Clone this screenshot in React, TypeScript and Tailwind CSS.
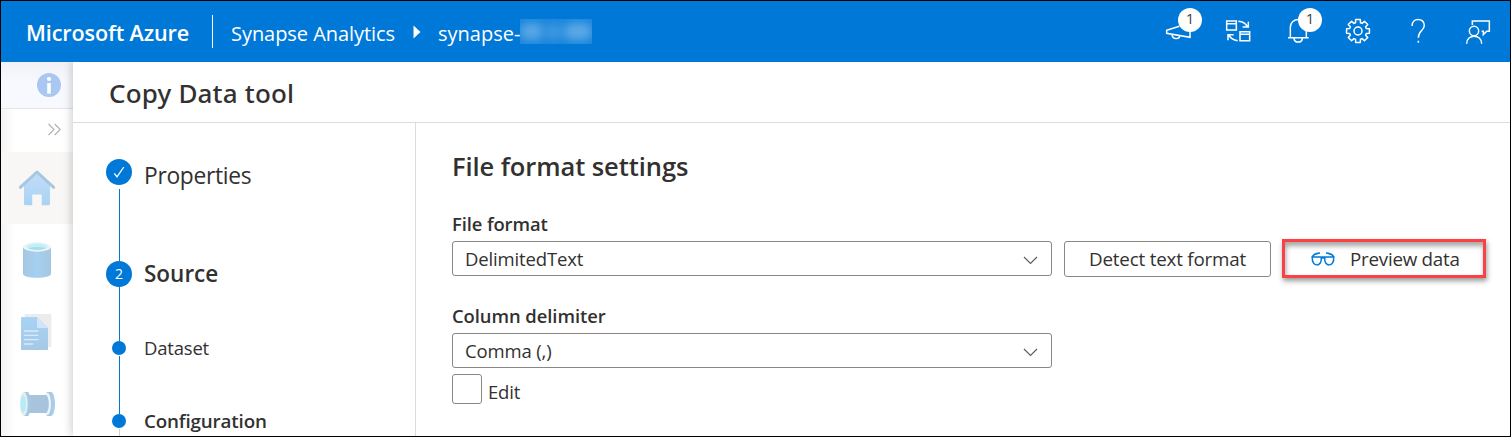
import type { ReactNode } from "react";

function HeaderIcon({ cx, children, badge }: { cx: number; children: ReactNode; badge?: string }) {
  return (
    <button className="relative flex h-full w-[60px] items-center justify-center pb-px">
      <svg
        width="40"
        height="40"
        viewBox={`${cx - 60} 33 120 120`}
        fill="none"
        stroke="white"
        strokeWidth="4.5"
      >
        {children}
      </svg>
      {badge && (
        <span className="absolute left-[30px] top-[7px] flex size-6 items-center justify-center rounded-full bg-white pb-[3px] text-[15px] leading-none text-[#444]">
          {badge}
        </span>
      )}
    </button>
  );
}

function gearPath(cx: number, cy: number) {
  const pts: string[] = [];
  for (let i = 0; i < 8; i++) {
    const a = (i * Math.PI) / 4;
    const steps: [number, number][] = [
      [-0.29, 26],
      [-0.2, 35],
      [0.2, 35],
      [0.29, 26],
    ];
    for (const [d, r] of steps) {
      pts.push(`${(cx + r * Math.cos(a + d)).toFixed(1)} ${(cy + r * Math.sin(a + d)).toFixed(1)}`);
    }
  }
  return `M${pts.join("L")}Z`;
}

function Header() {
  return (
    <header className="flex h-[61px] shrink-0 items-center bg-[#0078d7] pr-[2px] text-white">
      <span className="ml-[25px] w-[186px] whitespace-nowrap pt-[3px] text-[21.6px] font-semibold leading-8 tracking-[-0.12px]">
        Microsoft Azure
      </span>
      <span className="h-[33px] w-px bg-white" />
      <span className="ml-[18px] w-[164px] whitespace-nowrap pt-[5px] text-[20px] leading-8 tracking-[-0.05px]">Synapse Analytics</span>
      <svg className="ml-[18px]" width="8" height="14" viewBox="0 0 8 14" fill="white">
        <path d="M0.5 0.5L7.5 7L0.5 13.5Z" />
      </svg>
      <span className="ml-[17px] whitespace-nowrap pt-[5px] text-[20px] leading-8">synapse-</span>
      <span className="-mt-[1px] flex h-[25px] w-[72px] items-center overflow-hidden bg-[#1c86dc]">
        <span className="h-[17px] w-6 rounded-full bg-[#58a6e6] blur-[4px]" />
        <span className="h-[15px] w-5 rounded-full bg-[#3d98e0] blur-[4px]" />
        <span className="h-[17px] w-[28px] rounded-full bg-[#5aa8e6] blur-[4px]" />
      </span>
      <nav className="ml-auto flex h-full">
        <HeaderIcon cx={114} badge="1">
          <path d="M118 79L80 91V100L150 112V85M96 104C97 119 118 119 119 108" />
        </HeaderIcon>
        <HeaderIcon cx={294}>
          <path d="M260 63H289V90H260ZM260 71H289M300 95H329V122H300ZM300 103H329M295 64Q315 66 322 80M325 65V81H308M293 122Q274 119 267 106M264 121V104H281" />
        </HeaderIcon>
        <HeaderIcon cx={474} badge="1">
          <path d="M444 113H506M451 113V82C451 51 499 51 499 82V113M462 115C463 130 486 130 487 115" />
        </HeaderIcon>
        <HeaderIcon cx={654}>
          <path d={gearPath(654, 93)} strokeLinejoin="round" />
          <circle cx="654" cy="93" r="12" />
        </HeaderIcon>
        <HeaderIcon cx={834}>
          <path d="M816 78C816 51 853 53 853 76C853 92 835 92 835 113M835 122V128" />
        </HeaderIcon>
        <HeaderIcon cx={1014}>
          <circle cx="1002" cy="93" r="14" />
          <path d="M980 131C980 101 1025 101 1025 131M997 75V63H1048V94H1040L1030 104V94H1025" />
        </HeaderIcon>
      </nav>
    </header>
  );
}

function Rail() {
  return (
    <aside className="flex w-[72px] shrink-0 flex-col bg-[linear-gradient(90deg,#f4f4f4,#ffffff_14px)]">
      <div className="flex h-[47px] shrink-0 items-center justify-end border-b border-[#e5e5e8] bg-[linear-gradient(180deg,#eff1f6,#f7f9fe_20px)] pr-3">
        <svg width="24" height="24" viewBox="0 0 24 24">
          <circle cx="12" cy="12" r="12" fill="#a9c7f1" />
          <circle cx="12" cy="6" r="2.1" fill="white" />
          <path d="M10.2 10H13.8V20.7H10.2Z" fill="white" />
        </svg>
      </div>
      <div className="flex h-[43px] shrink-0 items-center justify-end pb-0.5 pr-[11px]">
        <svg width="15" height="13" viewBox="0 0 15 13" fill="none" stroke="#b5b3b1" strokeWidth="1.2">
          <path d="M1.5 1L7 6.5L1.5 12M7.7 1L13.2 6.5L7.7 12" />
        </svg>
      </div>
      <div className="flex h-[72px] shrink-0 items-center justify-center bg-[#f8f7f6]">
        <svg width="38" height="38" viewBox="54 88 114 114">
          <defs>
            <linearGradient id="house" x1="0" y1="0" x2="0" y2="1">
              <stop offset="0" stopColor="#c4dcfa" />
              <stop offset="1" stopColor="#a8d3f3" />
            </linearGradient>
          </defs>
          <path d="M111 98L150 132V192Q150 197 145 197H125V165H97V197H77Q72 197 72 192V132Z" fill="url(#house)" />
          <path d="M98 165H124V195H98Z" fill="#f8f7f6" />
          <path d="M61 143L111 97L161 143" fill="none" stroke="#a5c7df" strokeWidth="9" strokeLinecap="round" strokeLinejoin="round" />
        </svg>
      </div>
      <div className="flex h-[72px] shrink-0 items-center justify-center">
        <svg width="38" height="38" viewBox="54 303 114 114">
          <defs>
            <linearGradient id="cylinder">
              <stop offset="0" stopColor="#a5c7e1" />
              <stop offset="0.5" stopColor="#a5d0f0" />
              <stop offset="1" stopColor="#a5c7e1" />
            </linearGradient>
          </defs>
          <path d="M69 321V401C69 417 153 417 153 401V321Z" fill="url(#cylinder)" />
          <ellipse cx="111" cy="321" rx="42" ry="14" fill="#f1f2f3" />
          <ellipse cx="111" cy="320" rx="32" ry="9.5" fill="#bdf1fb" />
          <path d="M84 325Q111 317 138 325Q111 335 84 325Z" fill="#a8dcea" />
        </svg>
      </div>
      <div className="flex h-[72px] shrink-0 items-center justify-center">
        <svg width="38" height="38" viewBox="54 69 114 114">
          <defs>
            <linearGradient id="doc" x1="0" y1="0" x2="0" y2="1">
              <stop offset="0" stopColor="#a7d3f5" />
              <stop offset="1" stopColor="#a5c9e5" />
            </linearGradient>
          </defs>
          <path d="M74 72H154V171H74Z" fill="#ececec" />
          <path d="M63 81H111L144 114V180H63Z" fill="url(#doc)" />
          <path d="M111 81L144 114H111Z" fill="#d3e5fc" />
          <path d="M73 123H114M73 136H114M73 149H114M73 162H98" stroke="#d9eafc" strokeWidth="4" strokeLinecap="round" />
        </svg>
      </div>
      <div className="flex h-[72px] shrink-0 items-center justify-center">
        <svg width="38" height="38" viewBox="54 285 114 114">
          <ellipse cx="153" cy="342" rx="12" ry="36" fill="#a5cdec" />
          <path d="M140 306H154V378H140Z" fill="#a5c9e5" />
          <ellipse cx="142" cy="342" rx="11" ry="34" fill="#edf4f9" />
          <path d="M86 315H139C149 325 149 359 139 369H86Z" fill="#a7c4dc" />
          <path d="M71 306H84C95 316 95 368 84 378H71Z" fill="#a5c9e5" />
          <ellipse cx="71" cy="342" rx="12" ry="36" fill="#eeeeee" />
          <ellipse cx="70" cy="342" rx="8" ry="27" fill="#b0edf8" />
        </svg>
      </div>
    </aside>
  );
}

function Steps() {
  return (
    <ol className="w-[343px] shrink-0 overflow-hidden border-r border-[#dcdcdc] pl-[33px] pt-9 text-[#323130]">
      <li className="flex h-[102px] gap-3">
        <div className="flex w-[26px] flex-col items-center">
          <span className="flex size-[26px] shrink-0 items-center justify-center rounded-full bg-[#0078d7]">
            <svg width="12" height="12" viewBox="0 0 12 12" fill="none" stroke="white" strokeWidth="1.3">
              <path d="M1.3 7.3L4 10.8L10.8 1" />
            </svg>
          </span>
          <span className="ml-px mt-1 w-px flex-1 bg-[#0078d7]" />
        </div>
        <span className="h-[34px] text-[22.8px] leading-[34px] tracking-[-0.3px]">Properties</span>
      </li>
      <li className="flex h-20 gap-3">
        <div className="flex w-[26px] flex-col items-center">
          <span className="flex size-[26px] shrink-0 items-center justify-center rounded-full bg-[#0078d7] text-[14px] leading-none text-white">
            2
          </span>
          <span className="ml-px w-px flex-1 bg-[#0078d7]" />
        </div>
        <span className="h-[26px] text-[22.5px] font-semibold leading-[26px]">Source</span>
      </li>
      <li className="flex h-[73px] gap-3">
        <div className="flex w-[26px] flex-col items-center">
          <span className="size-[14px] shrink-0 rounded-full bg-[#0078d7]" />
          <span className="ml-px mt-px w-px flex-1 bg-[#0078d7]" />
        </div>
        <span className="h-[14px] text-[18.5px] leading-[14px] tracking-[-0.2px]">Dataset</span>
      </li>
      <li className="flex h-[73px] gap-3">
        <div className="flex w-[26px] flex-col items-center">
          <span className="size-[14px] shrink-0 rounded-full bg-[#0078d7]" />
          <span className="ml-px mt-px w-px flex-1 bg-[#d0d0d0]" />
        </div>
        <span className="h-[14px] text-[18.8px] font-semibold leading-[14px] tracking-[-0.15px]">Configuration</span>
      </li>
    </ol>
  );
}

function Select({ value }: { value: string }) {
  return (
    <div className="flex h-[35px] w-[600px] items-center justify-between rounded-[3px] border border-[#8a8886] pl-3 pr-[13px] text-[18.5px] tracking-[-0.15px]">
      <span className="pt-px">{value}</span>
      <svg className="mt-1" width="15" height="9" viewBox="0 0 15 9" fill="none" stroke="#605e5c" strokeWidth="1.2">
        <path d="M1 1L7.5 7.5L14 1" />
      </svg>
    </div>
  );
}

function Settings() {
  return (
    <section className="flex min-w-0 flex-1 flex-col pl-9 pt-[27px] text-[#323130]">
      <h2 className="h-8 text-[25.5px] font-semibold leading-8 tracking-[-0.08px]">File format settings</h2>
      <label className="mt-[30px] h-6 text-[18.4px] font-semibold leading-6 tracking-[-0.1px]">File format</label>
      <div className="mt-[3px] flex h-[39px] items-center">
        <Select value="DelimitedText" />
        <button className="ml-3 h-9 w-[207px] rounded-[3px] border border-[#8a8886] pt-px text-[18.8px] leading-none tracking-[-0.2px]">
          Detect text format
        </button>
        <div className="ml-[11px] flex h-[39px] w-[204px] items-center border-[3px] border-[#fb4143] pl-[26px] shadow-[1px_3px_5px_rgba(0,0,0,0.4),inset_1px_4px_5px_rgba(0,0,0,0.35)]">
          <svg width="24" height="14" viewBox="813 92 72 42" fill="none" stroke="#0078d7" strokeWidth="4.5">
            <path d="M814 107H884M843 112Q849 107 855 112M817 107C820 98 828 97 840 95M881 107C878 98 870 97 858 95" />
            <path d="M817 108C814 137 846 139 844 109M881 108C884 137 852 139 854 109" />
          </svg>
          <span className="ml-[15px] whitespace-nowrap pt-px text-[18.8px] leading-none tracking-[-0.25px]">Preview data</span>
        </div>
      </div>
      <label className="mt-[26px] h-6 text-[18.4px] font-semibold leading-6 tracking-[-0.05px]">Column delimiter</label>
      <div className="mt-[5px]">
        <Select value="Comma (,)" />
      </div>
      <div className="mt-1.5 flex items-start">
        <span className="size-[30px] rounded-[3px] border border-[#8a8886]" />
        <span className="ml-1.5 pt-[3px] text-[18.5px] leading-[30px] tracking-[-0.2px]">Edit</span>
      </div>
    </section>
  );
}

export default function App() {
  return (
    <div className="flex h-[437px] w-[1511px] flex-col overflow-hidden border border-black bg-white font-['Open_Sans','Noto_Sans',sans-serif]">
      <Header />
      <div className="flex min-h-0 flex-1 overflow-hidden">
        <Rail />
        <main className="relative flex min-w-0 flex-1 flex-col bg-white shadow-[-1px_0_9px_rgba(0,0,0,0.22)]">
          <h1 className="h-[61px] shrink-0 border-b border-[#dcdcdc] pl-9 font-['Noto_Sans'] text-[26px] font-medium leading-[63px] tracking-[0.18px] text-[#323130]">
            Copy Data tool
          </h1>
          <div className="flex min-h-0 flex-1">
            <Steps />
            <Settings />
          </div>
        </main>
      </div>
    </div>
  );
}
